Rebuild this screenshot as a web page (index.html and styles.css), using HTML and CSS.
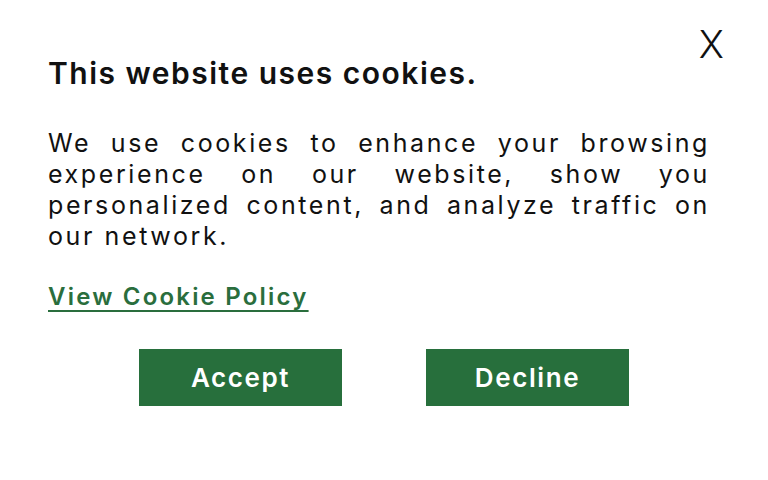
FILE: index.html
```html
<!DOCTYPE html>
<html lang="en">
<head>
<meta charset="utf-8">
<link rel="stylesheet" href="styles.css">
</head>
<body>
<div class="banner">
  <button class="close" aria-label="Close">X</button>
  <h1 class="title">This website uses cookies.</h1>
  <p class="text">We use cookies to enhance your browsing experience on our website, show you personalized content, and analyze traffic on our network.</p>
  <a class="policy" href="#">View Cookie Policy</a>
  <div class="actions">
    <button class="btn">Accept</button>
    <button class="btn">Decline</button>
  </div>
</div>
</body>
</html>
```
FILE: styles.css
```css
html, body {
  margin: 0;
  padding: 0;
  background: #ffffff;
}
body {
  font-family: Inter, "Noto Sans", sans-serif;
  color: #111111;
}
.banner {
  position: relative;
  width: 768px;
  height: 480px;
  box-sizing: border-box;
  padding: 55px 58px 0 48px;
}
.close {
  position: absolute;
  top: 22px;
  right: 44px;
  background: none;
  border: 0;
  padding: 0;
  font-family: Inter, sans-serif;
  font-weight: 300;
  font-size: 38px;
  line-height: 44px;
  color: #111;
  cursor: pointer;
}
.title {
  margin: 0;
  font-size: 30px;
  line-height: 36px;
  font-weight: 600;
  letter-spacing: 1.5px;
}
.text {
  margin: 37px 0 0;
  font-size: 25px;
  line-height: 31px;
  text-align: justify;
  letter-spacing: 2.6px;
}
.policy {
  display: inline-block;
  margin-top: 30px;
  font-size: 24px;
  line-height: 30px;
  font-weight: 600;
  letter-spacing: 2.2px;
  color: #2a6e3d;
  text-decoration: underline;
  text-underline-offset: 5px;
  text-decoration-thickness: 2px;
}
.actions {
  display: flex;
  gap: 84px;
  margin-top: 37px;
  padding-left: 91px;
}
.btn {
  width: 203px;
  height: 57px;
  border: 0;
  background: #276f3c;
  color: #ffffff;
  font-family: Inter, sans-serif;
  font-size: 26px;
  font-weight: 600;
  letter-spacing: 1.6px;
  cursor: pointer;
}
```
